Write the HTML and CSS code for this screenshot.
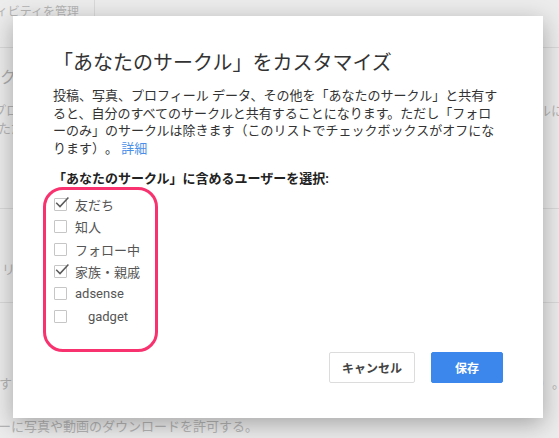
FILE: index.html
```html
<!DOCTYPE html>
<html lang="ja">
<head>
<meta charset="utf-8">
<link rel="stylesheet" href="styles.css">
</head>
<body>
<div class="page">
  <div class="topbar"><div class="tab"><span class="tab-text">アクティビティを管理</span></div></div>
  <div class="bg-row row-heading"><span class="cut-heading">サークル</span></div>
  <div class="bg-row row-a"><span class="cut-a">プロフィール</span><span class="right-a">ルに</span></div>
  <div class="bg-row row-b"><span class="cut-b">ただし</span></div>
  <div class="bg-line line-1"></div>
  <div class="bg-row row-c"><span class="cut-c">リスト</span></div>
  <div class="bg-line line-2"></div>
  <div class="bg-row row-d"><span class="cut-d">する</span><span class="right-d">）。</span></div>
  <div class="bg-row row-e"><span class="cut-e">ーに写真や動画のダウンロードを許可する。</span></div>
</div>

<div class="dialog">
  <h1 class="title">「あなたのサークル」をカスタマイズ</h1>
  <p class="desc">投稿、写真、プロフィール データ、その他を「あなたのサークル」と共有す<br>ると、自分のすべてのサークルと共有することになります。ただし「フォロ<br>ーのみ」のサークルは除きます（このリストでチェックボックスがオフにな<br>ります）。 <a class="link">詳細</a></p>
  <div class="subhead">「あなたのサークル」に含めるユーザーを選択:</div>
  <ul class="circles">
    <li class="circle"><span class="cb checked"><svg viewBox="0 0 16 16" width="16" height="16"><path d="M2.2 4.8 L6 8.6 L14.4 -0.6" fill="none" stroke="#5a5a5a" stroke-width="1.5"/></svg></span><span class="label">友だち</span></li>
    <li class="circle"><span class="cb"></span><span class="label">知人</span></li>
    <li class="circle"><span class="cb"></span><span class="label">フォロー中</span></li>
    <li class="circle"><span class="cb checked"><svg viewBox="0 0 16 16" width="16" height="16"><path d="M2.2 4.8 L6 8.6 L14.4 -0.6" fill="none" stroke="#5a5a5a" stroke-width="1.5"/></svg></span><span class="label">家族・親戚</span></li>
    <li class="circle"><span class="cb"></span><span class="label">adsense</span></li>
    <li class="circle"><span class="cb"></span><span class="label">&nbsp;&nbsp;&nbsp;&nbsp;gadget</span></li>
  </ul>
  <div class="actions">
    <button class="btn btn-cancel">キャンセル</button>
    <button class="btn btn-save">保存</button>
  </div>
</div>

<div class="highlight"></div>
</body>
</html>
```

FILE: styles.css
```css
html, body {
  margin: 0;
  padding: 0;
}
body {
  width: 559px;
  height: 438px;
  overflow: hidden;
  background: #ececec;
  font-family: "Roboto", "Noto Sans CJK JP", sans-serif;
  text-spacing-trim: space-all;
  position: relative;
}

/* faded page behind the dialog */
.page {
  color: #b5b5b5;
  font-size: 13px;
  display: flex;
  flex-direction: column;
}
.topbar {
  height: 47px;
  border-bottom: 1px solid #d9d9d9;
  display: flex;
}
.tab {
  width: 95px;
  border-right: 1px solid #d9d9d9;
  overflow: hidden;
  white-space: nowrap;
  font-size: 12px;
  line-height: 16px;
  padding-top: 4px;
  box-sizing: border-box;
}
.tab-text {
  display: inline-block;
  margin-left: -39px;
}
.bg-row {
  display: flex;
  justify-content: space-between;
  white-space: nowrap;
  overflow: hidden;
  height: 18px;
  line-height: 18px;
}
.row-heading {
  margin-top: 20px;
  height: 20px;
  line-height: 20px;
  font-size: 16px;
  color: #adadad;
}
.cut-heading { margin-left: -32px; }
.row-a { margin-top: 14px; }
.cut-a { margin-left: -7px; }
.right-a { margin-right: -5px; }
.row-b { margin-top: 0; height: 17px; line-height: 17px; }
.cut-b { margin-left: -2px; }
.bg-line {
  height: 0;
  border-top: 1px solid #d9d9d9;
}
.line-1 { margin-top: 71px; }
.row-c { margin-top: 52px; }
.cut-c { margin-left: 2px; }
.line-2 { margin-top: 23px; }
.row-d { margin-top: 72px; }
.cut-d { margin-left: -1px; }
.right-d { margin-right: -6px; }
.row-e { margin-top: 25px; }
.cut-e { margin-left: -2px; }

/* dialog */
.dialog {
  position: absolute;
  left: 13px;
  top: 16px;
  width: 530px;
  height: 402px;
  box-sizing: border-box;
  padding: 33px 40px 35px;
  background: #fff;
  box-shadow: 0 6px 22px rgba(0, 0, 0, 0.3);
  display: flex;
  flex-direction: column;
  color: #333;
}
.title {
  margin: 0;
  font-size: 20px;
  font-weight: 400;
  line-height: 28px;
  color: #333;
  white-space: nowrap;
}
.desc {
  margin: 10px 0 0;
  font-size: 13px;
  line-height: 17.5px;
  color: #333;
  white-space: nowrap;
}
.link {
  color: #4a8fe8;
  text-decoration: none;
}
.subhead {
  margin-top: 13px;
  font-size: 13px;
  line-height: 17.5px;
  font-weight: 700;
  color: #222;
}
.circles {
  list-style: none;
  margin: 6px 0 0;
  padding: 0;
}
.circle {
  height: 22.3px;
  display: flex;
  align-items: center;
}
.cb {
  position: relative;
  width: 13px;
  height: 13px;
  box-sizing: border-box;
  border: 1px solid #c6c6c6;
  border-radius: 1px;
  margin-left: 1px;
  background: #fff;
  flex: none;
}
.cb svg {
  position: absolute;
  left: -1px;
  top: -1px;
  overflow: visible;
}
.label {
  margin-left: 8px;
  font-size: 13px;
  color: #555;
  white-space: pre;
}
.actions {
  margin-top: auto;
  display: flex;
  justify-content: flex-end;
  gap: 16px;
}
.btn {
  height: 31px;
  box-sizing: border-box;
  border-radius: 2px;
  font-family: "Noto Sans CJK JP", sans-serif;
  font-size: 12px;
  font-weight: 700;
  padding: 0;
  cursor: pointer;
}
.btn-cancel {
  width: 86px;
  background: #fff;
  border: 1px solid #dcdcdc;
  color: #444;
}
.btn-save {
  width: 72px;
  background: #3b87ec;
  border: 1px solid #3b87ec;
  color: #fff;
}

/* annotation */
.highlight {
  position: absolute;
  left: 43px;
  top: 187px;
  width: 115px;
  height: 165px;
  box-sizing: border-box;
  border: 3px solid #f8326f;
  border-radius: 20px;
}
```
